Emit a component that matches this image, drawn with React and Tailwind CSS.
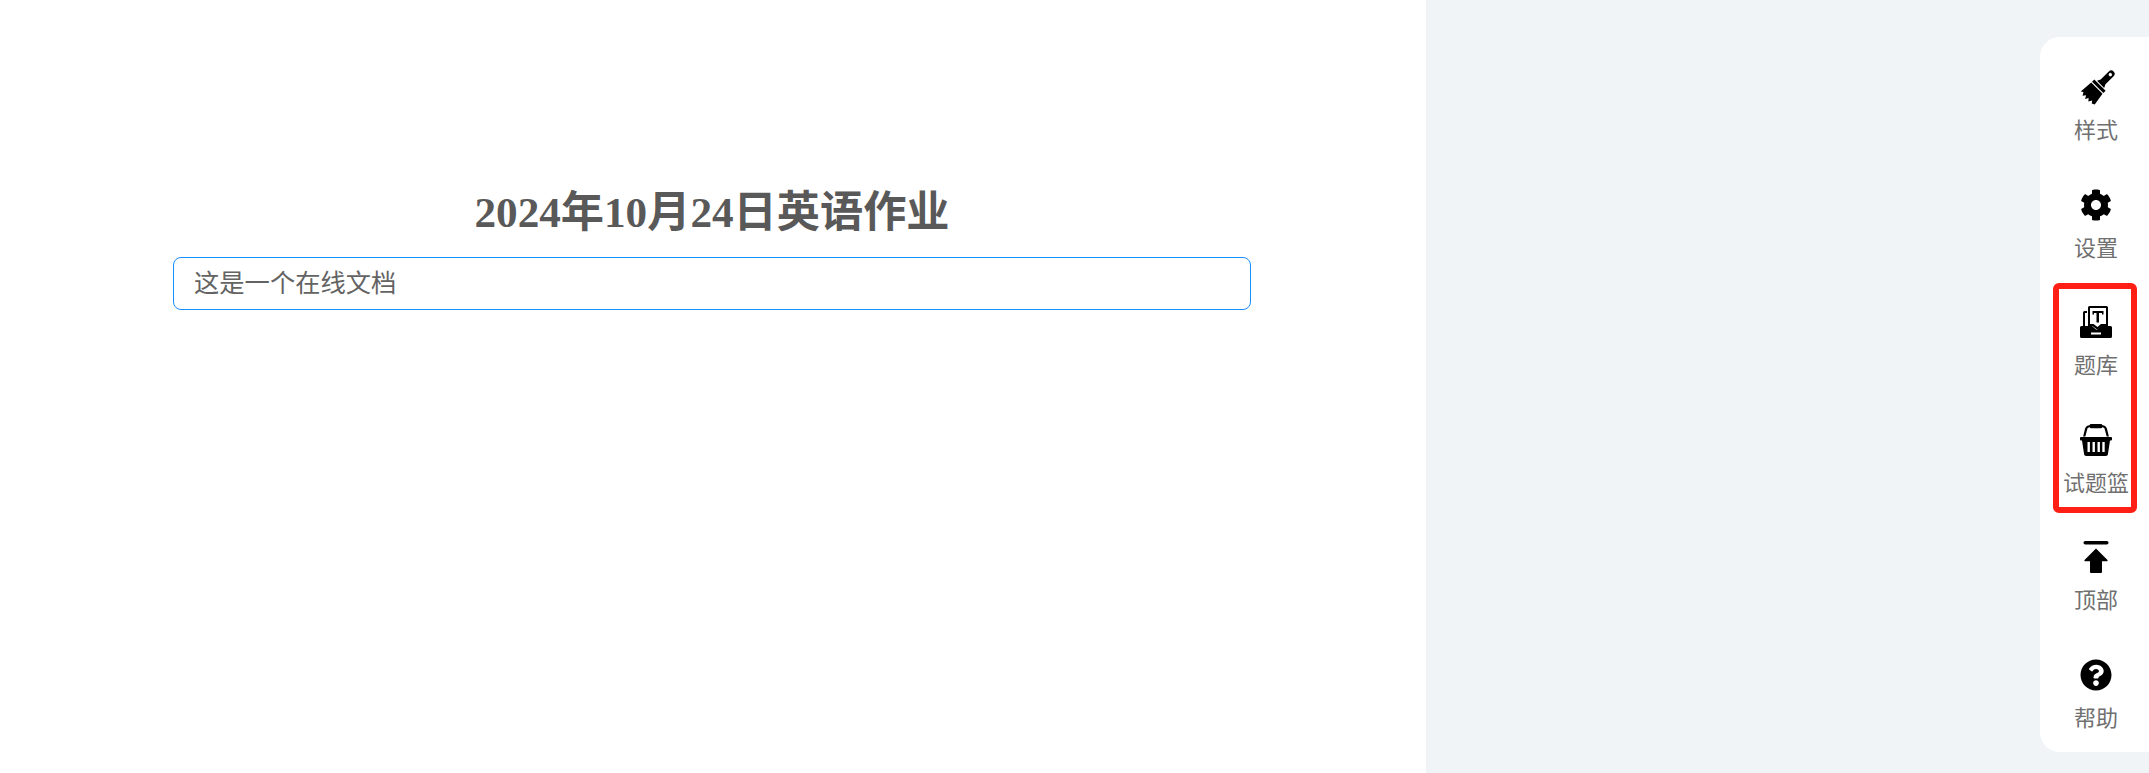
import React from 'react';
import { FaCog, FaQuestionCircle } from 'react-icons/fa';

const BrushIcon = () => (
  <svg width="34" height="36" viewBox="0 0 34 36" fill="currentColor" className="translate-y-[2px] overflow-visible">
    <g transform="rotate(45 17 18)">
      <path d="M13.6 -3.500a3.400 3.400 0 0 1 6.800 0V8l1.600 3.500H12L13.600 8z M17 -4a1.700 1.700 0 1 0 0 3.400 1.700 1.700 0 0 0 0-3.400z" fillRule="evenodd" />
      <rect x="9" y="12.400" width="16" height="3.200" />
      <path d="M9 16.800h16l2 13-2.800 1.400-1.800-2.400-2 3.400-2.200-2.600-1.800 3.200-2-3.400-2.200 2.800-1.900-3.200-2.300 1.600z" />
    </g>
  </svg>
);

const BankIcon = () => (
  <svg width="32" height="32" viewBox="0 0 32 32" fill="currentColor">
    <path d="M3 20V6.5A1.5 1.5 0 0 1 4.5 5H7v2H5v13z" />
    <path fillRule="evenodd" d="M9.5 0h17A1.5 1.5 0 0 1 28 1.500V20h-6l-4 3h-1.600l-4-3H8V1.500A1.500 1.500 0 0 1 9.500 0zM10 2v16h3.500l4 3 3.500-3h5V2z" />
    <path d="M12.500 5h11v3.500h-1.500V7h-3v9.500h-2.500V7h-2.500v1.500h-1.500z" />
    <path fillRule="evenodd" d="M1.500 20H12l4 3.500h1l4.500-3.500h9A1.500 1.500 0 0 1 32 21.500V30.500A1.500 1.500 0 0 1 30.500 32H1.500A1.500 1.500 0 0 1 0 30.500V21.500A1.500 1.500 0 0 1 1.500 20zM11 26.500v2h10v-2z" />
  </svg>
);

const BasketIcon = () => (
  <svg width="32" height="32" viewBox="0 0 32 32" fill="currentColor">
    <path d="M11.500 0h9a2 2 0 0 1 2 1.200c2.300.2 3.800 1.200 4.400 3.300l2 8h-2.200l-2-7.500c-.4-1.200-1.200-1.700-2.300-1.800a2 2 0 0 1-1.900 1H11.500a2 2 0 0 1-1.900-1c-1.100.1-1.900.6-2.300 1.800l-2 7.500H3.100l2-8c.6-2.100 2.100-3.100 4.400-3.300a2 2 0 0 1 2-1.200z" />
    <path fillRule="evenodd" d="M1 13h30a1 1 0 0 1 1 1v1.500a1 1 0 0 1-1 1h-1l-2 13A2.500 2.500 0 0 1 25.500 32h-19A2.500 2.500 0 0 1 4 29.500l-2-13H1a1 1 0 0 1-1-1V14a1 1 0 0 1 1-1zM7.500 18v10h2.400V18zM12.500 18v10h2.400V18zM17.500 18v10h2.400V18zM22.300 18v10h2.400V18z" />
  </svg>
);

const TopIcon = () => (
  <svg width="32" height="32" viewBox="0 0 32 32" fill="currentColor">
    <rect x="3.500" y="0" width="25" height="3.500" rx="1.750" />
    <path d="M16 7.500l11.500 11.500a.8.8 0 0 1-.6 1.300H22V31a1 1 0 0 1-1 1H11a1 1 0 0 1-1-1V20.300H5.100a.8.8 0 0 1-.6-1.300z" />
  </svg>
);

const items = [
  { label: '样式', icon: <BrushIcon /> },
  { label: '设置', icon: <FaCog size={32} /> },
  { label: '题库', icon: <BankIcon /> },
  { label: '试题篮', icon: <BasketIcon /> },
  { label: '顶部', icon: <TopIcon /> },
  { label: '帮助', icon: <FaQuestionCircle size={32} /> },
];

const cjkSans = "font-['Noto_Sans_CJK_SC','Liberation_Sans',sans-serif]";

export default function App() {
  return (
    <div className="flex h-[773px] w-full overflow-hidden bg-[#f0f4f7]">
      <main className="w-[1426px] shrink-0 bg-white pt-[183px]">
        <h1 className="mx-[173px] w-[1078px] text-center font-['Liberation_Serif','Noto_Sans_CJK_SC',serif] text-[43.2px] leading-[60px] font-bold text-[#595959]">
          2024年10月24日英语作业
        </h1>
        <div className={`mx-[173px] mt-[14px] flex h-[53px] w-[1078px] items-center rounded-[8px] border border-[#1890ff] px-[20px] pb-[3px] text-[25.3px] text-[#636363] ${cjkSans}`}>
          这是一个在线文档
        </div>
      </main>
      <div className="flex flex-1 justify-end pt-[37px]">
        <aside className="relative h-[715px] w-[109px] rounded-l-[20px] bg-white pt-[6px]">
          {items.map((item) => (
            <div key={item.label} className="flex h-[117.6px] w-[112px] flex-col items-center pt-[28px]">
              <div className="flex h-[32px] items-center justify-center text-black">{item.icon}</div>
              <span className={`mt-[9px] text-[22px] leading-[32px] whitespace-nowrap text-[#707070] ${cjkSans}`}>
                {item.label}
              </span>
            </div>
          ))}
          <div className="absolute top-[246px] left-[13px] h-[230px] w-[84px] rounded-[6px] border-[6px] border-[#ff1f14]" />
        </aside>
      </div>
    </div>
  );
}
